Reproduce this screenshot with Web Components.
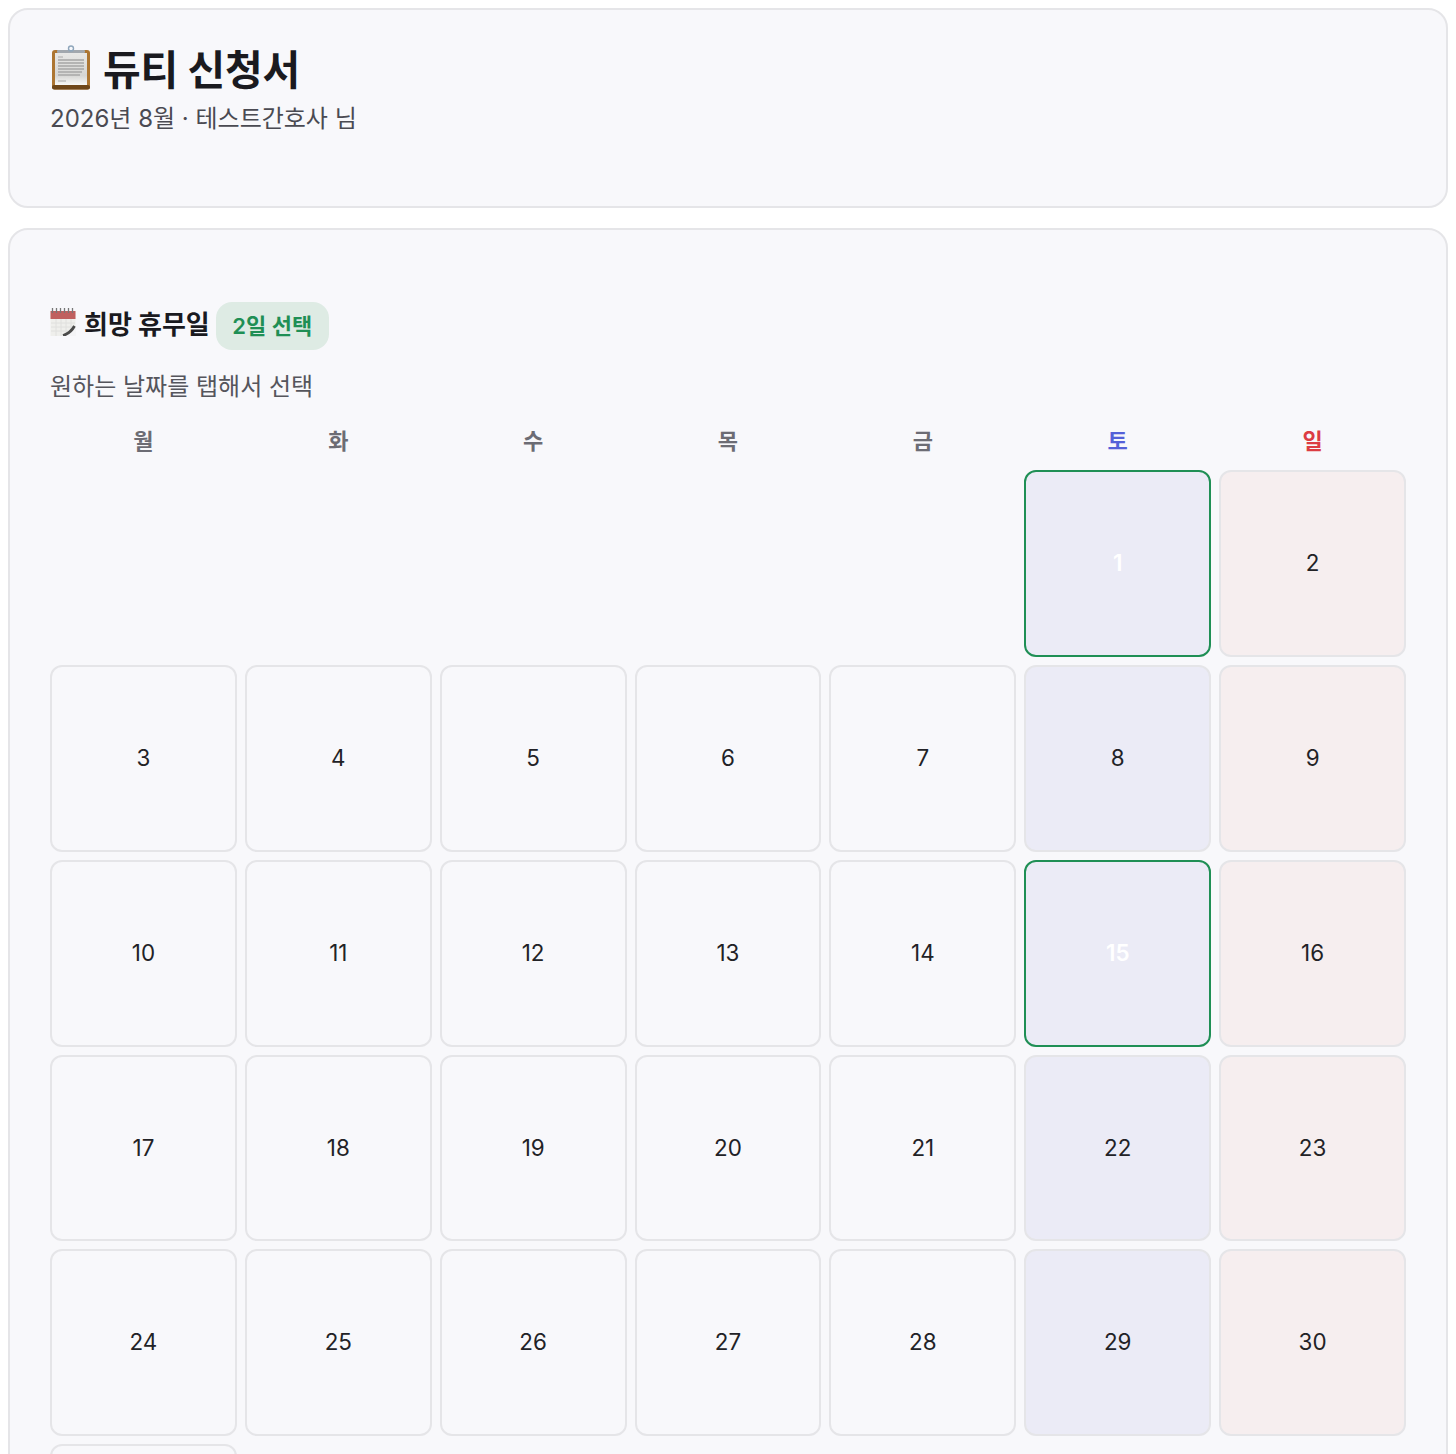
<!DOCTYPE html>
<html lang="ko">
<head>
<meta charset="utf-8">
<title>듀티 신청서</title>
<style>
  html { overflow: hidden; }
  body {
    margin: 8px;
    background: #fff;
    color: #1a1a1f;
    font-family: Inter, "Noto Sans CJK KR", sans-serif;
  }
  duty-card + duty-card { margin-top: 20px; }
</style>
</head>
<body>
<duty-card class="head">
  <duty-header></duty-header>
</duty-card>
<duty-card class="main">
  <duty-calendar year="2026" month="8" selected="1,15"></duty-calendar>
</duty-card>

<script>
/**
 * Rounded panel used for both page sections
 */
class DutyCard extends HTMLElement {
  constructor() {
    super();
    this.attachShadow({ mode: 'open' });
    this.shadowRoot.innerHTML = `
      <style>
        :host {
          display: block;
          box-sizing: border-box;
          padding: 40px;
          background: #f8f8fb;
          border: 2px solid #e5e5e8;
          border-radius: 20px;
        }
        :host(.head) { height: 200px; padding-top: 29px; }
        :host(.main) { padding-top: 72px; }
      </style>
      <slot></slot>
    `;
  }
}

/**
 * Page title with clipboard emoji
 */
class DutyHeader extends HTMLElement {
  constructor() {
    super();
    this.attachShadow({ mode: 'open' });
    this.shadowRoot.innerHTML = `
      <style>
        :host { display: block; }
        h1 {
          margin: 0;
          display: flex;
          align-items: center;
          gap: 11px;
          height: 56px;
          font-size: 41px;
          font-weight: 700;
          letter-spacing: -0.2px;
          color: #1a1a1f;
        }
        svg { width: 42px; height: 46px; flex: none; }
        p {
          margin: 7.500px 0 0;
          font-size: 24px;
          line-height: 32px;
          color: #4a4a52;
        }
      </style>
      <h1>
        <svg viewBox="0 0 42 46" aria-hidden="true">
          <defs>
            <linearGradient id="paper" x1="0" y1="0" x2="0" y2="1">
              <stop offset="0" stop-color="#e8e8e6"/>
              <stop offset="0.7" stop-color="#d6d6d4"/>
              <stop offset="1" stop-color="#f8f8f6"/>
            </linearGradient>
            <filter id="soft"><feGaussianBlur stdDeviation="0.6"/></filter>
          </defs>
          <rect x="2" y="6" width="38" height="39.500" rx="3" fill="#ad7632"/>
          <rect x="2" y="41" width="38" height="4.500" rx="2" fill="#6f4719"/>
          <rect x="5" y="9" width="32" height="32" fill="url(#paper)"/>
          <path d="M8 16h26M8 19h26M8 22h26M8 25h26M8 28h24M8 31h22" stroke="#b4b4b3" stroke-width="2" filter="url(#soft)"/>
          <path d="M8 13h5M8 37h8" stroke="#aaa" stroke-width="1"/>
          <rect x="7" y="6" width="28" height="3" rx="1" fill="#a2a8ae"/>
          <circle cx="21" cy="4.500" r="2.500" fill="none" stroke="#8fa6bb" stroke-width="1.400"/>
        </svg>
        <span>듀티 신청서</span>
      </h1>
      <p>2026년 8월 · 테스트간호사 님</p>
    `;
  }
}

/**
 * One date in the calendar
 */
class DayCell extends HTMLElement {
  constructor() {
    super();
    this.attachShadow({ mode: 'open' });
    this.shadowRoot.innerHTML = `
      <style>
        :host {
          display: flex;
          align-items: center;
          justify-content: center;
          box-sizing: border-box;
          aspect-ratio: 1;
          min-width: 0;
          padding-bottom: 2px;
          background: #f8f8fb;
          border: 2px solid #e5e5e8;
          border-radius: 12px;
          font-size: 22.4px;
          color: #222226;
        }
        :host(.sat) { background: #ebebf6; }
        :host(.sun) { background: #f6eeef; }
        :host(.on) { border-color: #1f8f55; color: #fff; font-weight: 600; }
      </style>
      <slot></slot>
    `;
  }
}

/**
 * Month grid for choosing days off
 */
class DutyCalendar extends HTMLElement {
  constructor() {
    super();
    this.attachShadow({ mode: 'open' });
  }

  connectedCallback() {
    this.render();
  }

  render() {
    const year = Number(this.getAttribute('year'));
    const month = Number(this.getAttribute('month'));
    const selected = (this.getAttribute('selected') || '').split(',').map(Number);
    const total = new Date(year, month, 0).getDate();
    // Monday first
    const blanks = (new Date(year, month - 1, 1).getDay() + 6) % 7;
    const names = ['월', '화', '수', '목', '금', '토', '일'];

    let cells = '<span></span>'.repeat(blanks);
    for (let d = 1; d <= total; d++) {
      const col = (blanks + d - 1) % 7;
      const cls = [col === 5 ? 'sat' : '', col === 6 ? 'sun' : '', selected.includes(d) ? 'on' : '']
        .filter(Boolean).join(' ');
      cells += `<day-cell class="${cls}">${d}</day-cell>`;
    }

    this.shadowRoot.innerHTML = `
      <style>
        :host { display: block; }
        h2 {
          margin: 0;
          display: flex;
          align-items: center;
          height: 48px;
          font-size: 26px;
          font-weight: 700;
          color: #1a1a1f;
        }
        h2 svg { width: 26px; height: 28px; margin: 0 8px 8px 0; flex: none; }
        .label { padding-bottom: 8px; }
        .badge {
          margin-left: 6px;
          height: 48px;
          padding: 0 16.500px 4px;
          box-sizing: border-box;
          display: flex;
          align-items: center;
          border-radius: 16px;
          background: #deebe4;
          color: #1f8f55;
          font-size: 22px;
          font-weight: 600;
        }
        .hint {
          margin: 20px 0 0;
          font-size: 24px;
          line-height: 34px;
          color: #55555c;
        }
        .grid {
          display: grid;
          grid-template-columns: repeat(7, 1fr);
          gap: 8px;
        }
        .names { margin: 15px 0 12px; height: 39px; align-items: center; }
        .names span {
          text-align: center;
          font-size: 22px;
          font-weight: 600;
          color: #6c6c74;
        }
        .names .sat { color: #5561d8; }
        .names .sun { color: #dc3c42; }
      </style>
      <h2>
        <svg viewBox="0 0 26 28" aria-hidden="true">
          <rect x="0.500" y="3" width="25" height="25" fill="#efefec"/>
          <path d="M1 15h24M1 19h24M1 23h20M6 10v18M11 10v18M16 10v18M21 10v12" stroke="#e0e0de" stroke-width="1"/>
          <rect x="0.500" y="3" width="25" height="8" fill="#c0605f"/>
          <path d="M2.500 0v5M6.500 0v5M10.500 0v5M14.500 0v5M18.500 0v5M22.500 0v5" stroke="#777" stroke-width="1.300"/>
          <path d="M13 28C20 26 24 21 26 15V28Z" fill="#f4f4f6"/>
          <path d="M13 27.500C18 26 22 22.500 24.500 18" stroke="#4a4a4a" stroke-width="2.800" fill="none"/>
        </svg>
        <span class="label">희망 휴무일</span>
        <span class="badge">${selected.length}일 선택</span>
      </h2>
      <p class="hint">원하는 날짜를 탭해서 선택</p>
      <div class="grid names">
        ${names.map((n, i) => `<span class="${i === 5 ? 'sat' : i === 6 ? 'sun' : ''}">${n}</span>`).join('')}
      </div>
      <div class="grid">${cells}</div>
    `;
  }
}

customElements.define('duty-card', DutyCard);
customElements.define('duty-header', DutyHeader);
customElements.define('day-cell', DayCell);
customElements.define('duty-calendar', DutyCalendar);
</script>
</body>
</html>
